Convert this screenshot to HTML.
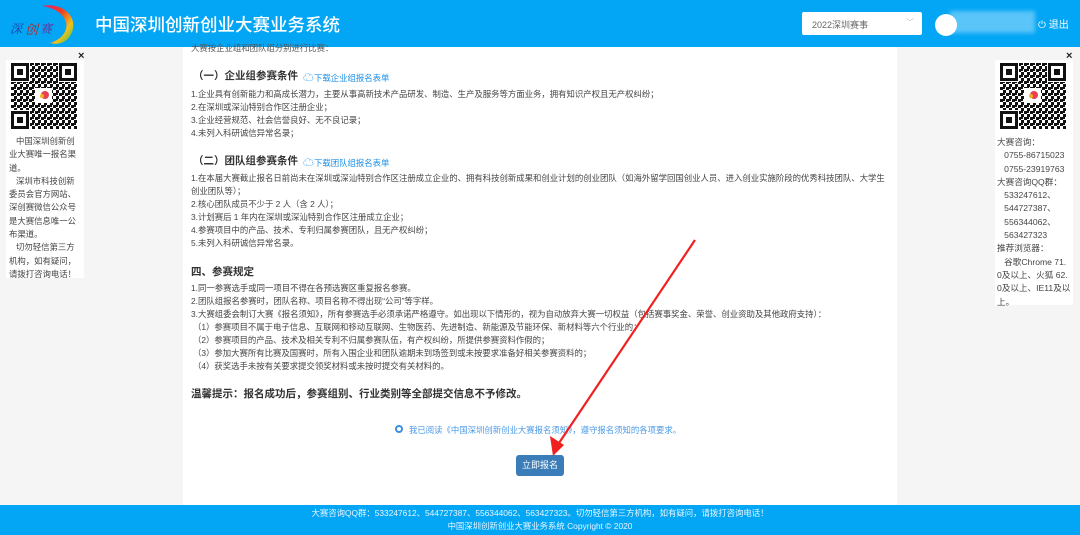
<!DOCTYPE html>
<html><head><meta charset="utf-8"><style>
*{margin:0;padding:0;box-sizing:border-box}
body{width:1080px;height:535px;overflow:hidden;background:#f5f5f5;font-family:"Liberation Sans","Noto Sans CJK SC",sans-serif;position:relative;color:#333}
.a{position:absolute;white-space:nowrap}
.t{font-size:8.4px;color:#444;line-height:13px}
.h{font-size:10.5px;font-weight:bold;color:#333}
.lk{font-size:8.4px;color:#1e90e8}
#hd{position:absolute;left:0;top:0;width:1080px;height:47px;background:#02a6f5}
#main{position:absolute;left:183px;top:47px;width:714px;height:458px;background:#fff}
#ft{position:absolute;left:0;top:505px;width:1080px;height:30px;background:#02a6f5;color:#e8f6ff;font-size:8.4px;text-align:center}
.side{position:absolute;background:#fff;font-size:8.4px;line-height:13.3px;color:#444;word-break:break-all}
</style></head><body>
<div id="hd">
 <svg class="a" style="left:8px;top:2px" width="70" height="44" viewBox="0 0 70 44">
  <defs><linearGradient id="g" x1="0" y1="0" x2="1" y2="1"><stop offset="0" stop-color="#e0207a"/><stop offset=".4" stop-color="#f04020"/><stop offset=".7" stop-color="#f0c020"/><stop offset="1" stop-color="#40c040"/></linearGradient></defs>
  <path d="M34 4 C52 0 68 12 65 27 C62 39 52 44 42 41 C55 37 60 28 58 20 C55 11 46 6 34 4Z" fill="url(#g)"/>
  <text x="2" y="31" font-size="12" font-style="italic" fill="#1a3aa0" font-family="Noto Serif CJK SC,serif">深</text>
  <text x="17" y="32" font-size="13" font-style="italic" fill="#c02020" font-family="Noto Serif CJK SC,serif">创</text>
  <text x="32" y="31" font-size="12" font-style="italic" fill="#7a2090" font-family="Noto Serif CJK SC,serif">赛</text>
 </svg>
 <div class="a" style="left:95px;top:12px;font-size:17.5px;color:#fff;font-weight:500">中国深圳创新创业大赛业务系统</div>
 <div class="a" style="left:802px;top:12px;width:120px;height:23px;background:#fff;border-radius:2px;font-size:9px;color:#666;padding:6px 0 0 10px">2022深圳赛事<span style="position:absolute;right:8px;top:5px;color:#bbb;font-size:8px">﹀</span></div>
 <div class="a" style="left:935px;top:14px;width:22px;height:22px;border-radius:50%;background:#fff"></div>
 <div class="a" style="left:950px;top:11px;width:85px;height:22px;background:rgba(255,255,255,.35);filter:blur(2px)"></div>
 <div class="a" style="left:1038px;top:16px;font-size:10px;color:#fff">⏻ 退出</div>
</div>

<div id="main"></div>
<div class="a t" style="left:191px;top:42px;color:#555">大赛按企业组和团队组分别进行比赛：</div>
<div class="a h" style="left:193px;top:68px">（一）企业组参赛条件</div>
<div class="a lk" style="left:303px;top:69px"><span style="color:#1e90e8;font-size:11px">☁</span>下载企业组报名表单</div>
<div class="a t" style="left:191px;top:88px">1.企业具有创新能力和高成长潜力，主要从事高新技术产品研发、制造、生产及服务等方面业务，拥有知识产权且无产权纠纷；</div>
<div class="a t" style="left:191px;top:101px">2.在深圳或深汕特别合作区注册企业；</div>
<div class="a t" style="left:191px;top:114px">3.企业经营规范、社会信誉良好、无不良记录；</div>
<div class="a t" style="left:191px;top:127px">4.未列入科研诚信异常名录；</div>
<div class="a h" style="left:193px;top:153px">（二）团队组参赛条件</div>
<div class="a lk" style="left:303px;top:154px"><span style="color:#1e90e8;font-size:11px">☁</span>下载团队组报名表单</div>
<div class="a t" style="left:191px;top:172px">1.在本届大赛截止报名日前尚未在深圳或深汕特别合作区注册成立企业的、拥有科技创新成果和创业计划的创业团队（如海外留学回国创业人员、进入创业实施阶段的优秀科技团队、大学生</div>
<div class="a t" style="left:191px;top:185px">创业团队等）；</div>
<div class="a t" style="left:191px;top:198px">2.核心团队成员不少于 2 人（含 2 人）；</div>
<div class="a t" style="left:191px;top:211px">3.计划赛后 1 年内在深圳或深汕特别合作区注册成立企业；</div>
<div class="a t" style="left:191px;top:224px">4.参赛项目中的产品、技术、专利归属参赛团队，且无产权纠纷；</div>
<div class="a t" style="left:191px;top:237px">5.未列入科研诚信异常名录。</div>
<div class="a h" style="left:191px;top:264px">四、参赛规定</div>
<div class="a t" style="left:191px;top:282px">1.同一参赛选手或同一项目不得在各预选赛区重复报名参赛。</div>
<div class="a t" style="left:191px;top:295px">2.团队组报名参赛时，团队名称、项目名称不得出现“公司”等字样。</div>
<div class="a t" style="left:191px;top:308px">3.大赛组委会制订大赛《报名须知》，所有参赛选手必须承诺严格遵守。如出现以下情形的，视为自动放弃大赛一切权益（包括赛事奖金、荣誉、创业资助及其他政府支持）：</div>
<div class="a t" style="left:193px;top:321px">（1）参赛项目不属于电子信息、互联网和移动互联网、生物医药、先进制造、新能源及节能环保、新材料等六个行业的；</div>
<div class="a t" style="left:193px;top:334px">（2）参赛项目的产品、技术及相关专利不归属参赛队伍，有产权纠纷，所提供参赛资料作假的；</div>
<div class="a t" style="left:193px;top:347px">（3）参加大赛所有比赛及国赛时，所有入围企业和团队逾期未到场签到或未按要求准备好相关参赛资料的；</div>
<div class="a t" style="left:193px;top:360px">（4）获奖选手未按有关要求提交领奖材料或未按时提交有关材料的。</div>
<div class="a h" style="left:191px;top:386px">温馨提示：报名成功后，参赛组别、行业类别等全部提交信息不予修改。</div>
<div class="a" style="left:395px;top:425px;width:8px;height:8px;border-radius:50%;border:2px solid #3a8ee6;background:#fff"></div>
<div class="a lk" style="left:409px;top:424px;color:#4a9ae8">我已阅读《中国深圳创新创业大赛报名须知》，遵守报名须知的各项要求。</div>
<div class="a" style="left:516px;top:455px;width:48px;height:21px;background:#3a7db8;border-radius:3px;color:#fff;font-size:9px;text-align:center;line-height:21px">立即报名</div>
<svg class="a" style="left:0;top:0" width="1080" height="535"><line x1="695" y1="240" x2="557" y2="446" stroke="#f02020" stroke-width="2.2"/><polygon points="553,456 550,436 564,445" fill="#f02020"/></svg>

<div class="a" style="left:78px;top:50px;font-size:11px;color:#222;font-weight:bold">×</div>
<div class="side" style="left:6px;top:60px;width:78px;height:73px"></div>
<svg class="a" style="left:11px;top:63px" width="66" height="66" viewBox="0 0 66 66">
 <defs><pattern id="q" width="6" height="6" patternUnits="userSpaceOnUse"><rect width="3" height="3" fill="#111"/><rect x="3" y="3" width="3" height="3" fill="#111"/><rect x="3" width="2" height="2" fill="#111"/></pattern></defs>
 <rect width="66" height="66" fill="url(#q)"/>
 <g fill="#fff"><rect width="19" height="19"/><rect x="47" width="19" height="19"/><rect y="47" width="19" height="19"/><rect x="24" y="25" width="17" height="15"/></g>
 <g fill="none" stroke="#111" stroke-width="3"><rect x="1.5" y="1.5" width="15" height="15"/><rect x="49.5" y="1.5" width="15" height="15"/><rect x="1.5" y="49.5" width="15" height="15"/></g>
 <g fill="#111"><rect x="6" y="6" width="6" height="6"/><rect x="54" y="6" width="6" height="6"/><rect x="6" y="54" width="6" height="6"/></g>
 <circle cx="34" cy="32" r="4" fill="#e84050"/><circle cx="31" cy="33" r="2" fill="#f0b020"/>
</svg>
<div class="side" style="left:6px;top:133px;width:78px;height:145px;padding:2px 3px 0 3px;white-space:normal">&nbsp;&nbsp;&nbsp;中国深圳创新创业大赛唯一报名渠道。<br>&nbsp;&nbsp;&nbsp;深圳市科技创新委员会官方网站、深创赛微信公众号是大赛信息唯一公布渠道。<br>&nbsp;&nbsp;&nbsp;切勿轻信第三方机构，如有疑问，请拨打咨询电话！</div>

<div class="a" style="left:1066px;top:50px;font-size:11px;color:#222;font-weight:bold">×</div>
<div class="side" style="left:995px;top:60px;width:78px;height:75px"></div>
<svg class="a" style="left:1000px;top:63px" width="66" height="66" viewBox="0 0 66 66">
 <rect width="66" height="66" fill="url(#q)"/>
 <g fill="#fff"><rect width="19" height="19"/><rect x="47" width="19" height="19"/><rect y="47" width="19" height="19"/><rect x="24" y="25" width="17" height="15"/></g>
 <g fill="none" stroke="#111" stroke-width="3"><rect x="1.5" y="1.5" width="15" height="15"/><rect x="49.5" y="1.5" width="15" height="15"/><rect x="1.5" y="49.5" width="15" height="15"/></g>
 <g fill="#111"><rect x="6" y="6" width="6" height="6"/><rect x="54" y="6" width="6" height="6"/><rect x="6" y="54" width="6" height="6"/></g>
 <circle cx="34" cy="32" r="4" fill="#e84050"/><circle cx="31" cy="33" r="2" fill="#f0b020"/>
</svg>
<div class="side" style="left:995px;top:135px;width:78px;height:170px;padding:1px 2px 0 2px;white-space:normal;font-size:8.6px">大赛咨询：<br>&nbsp;&nbsp;&nbsp;0755-86715023<br>&nbsp;&nbsp;&nbsp;0755-23919763<br>大赛咨询QQ群：<br>&nbsp;&nbsp;&nbsp;533247612、<br>&nbsp;&nbsp;&nbsp;544727387、<br>&nbsp;&nbsp;&nbsp;556344062、<br>&nbsp;&nbsp;&nbsp;563427323<br>推荐浏览器：<br>&nbsp;&nbsp;&nbsp;谷歌Chrome 71.0及以上、火狐 62.0及以上、IE11及以上。</div>

<div id="ft"><div style="padding-top:2px;line-height:13px">大赛咨询QQ群：533247612、544727387、556344062、563427323。切勿轻信第三方机构，如有疑问，请拨打咨询电话！<br>中国深圳创新创业大赛业务系统 Copyright © 2020</div></div>
</body></html>
